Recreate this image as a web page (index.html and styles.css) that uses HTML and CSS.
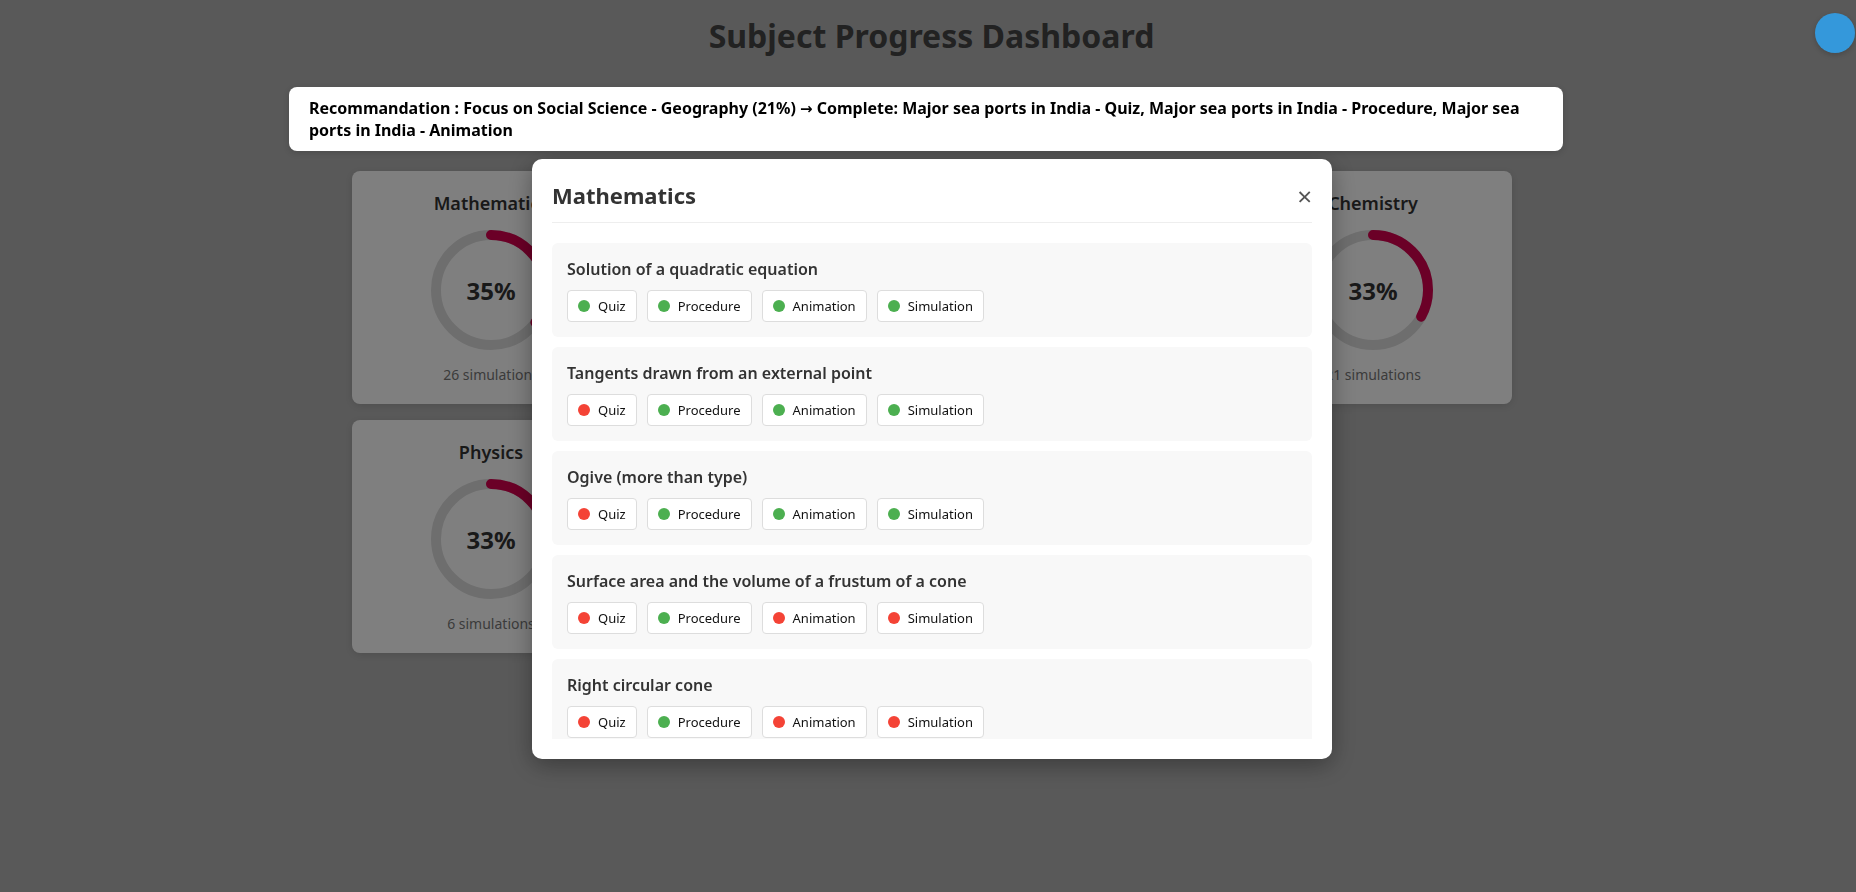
FILE: index.html
```html
<!DOCTYPE html>
<html lang="en">
<head>
<meta charset="utf-8">
<title>Subject Progress Dashboard</title>
<link rel="stylesheet" href="styles.css">
</head>
<body>
<div class="page">
  <h1 class="title">Subject Progress Dashboard</h1>
  <div class="rec">Recommandation : Focus on Social Science - Geography (21%) <span class="arrow">→</span> Complete: Major sea ports in India - Quiz, Major sea ports in India - Procedure, Major sea ports in India - Animation</div>
  <div class="grid">
    <div class="card">
      <h3 class="card-title">Mathematics</h3>
      <div class="ring">
        <svg width="120" height="120" viewBox="0 0 120 120"><circle class="track" cx="60" cy="60" r="55"/><circle class="arc" cx="60" cy="60" r="55" stroke-dasharray="120.95 345.58" transform="rotate(-90 60 60)"/></svg>
        <span class="pct">35%</span>
      </div>
      <p class="count">26 simulations</p>
    </div>
    <div class="card">
      <h3 class="card-title">Biology</h3>
      <div class="ring">
        <svg width="120" height="120" viewBox="0 0 120 120"><circle class="track" cx="60" cy="60" r="55"/><circle class="arc" cx="60" cy="60" r="55" stroke-dasharray="96.76 345.58" transform="rotate(-90 60 60)"/></svg>
        <span class="pct">28%</span>
      </div>
      <p class="count">18 simulations</p>
    </div>
    <div class="card">
      <h3 class="card-title">Social Science - Geography</h3>
      <div class="ring">
        <svg width="120" height="120" viewBox="0 0 120 120"><circle class="track" cx="60" cy="60" r="55"/><circle class="arc" cx="60" cy="60" r="55" stroke-dasharray="72.57 345.58" transform="rotate(-90 60 60)"/></svg>
        <span class="pct">21%</span>
      </div>
      <p class="count">12 simulations</p>
    </div>
    <div class="card">
      <h3 class="card-title">Chemistry</h3>
      <div class="ring">
        <svg width="120" height="120" viewBox="0 0 120 120"><circle class="track" cx="60" cy="60" r="55"/><circle class="arc" cx="60" cy="60" r="55" stroke-dasharray="114.04 345.58" transform="rotate(-90 60 60)"/></svg>
        <span class="pct">33%</span>
      </div>
      <p class="count">21 simulations</p>
    </div>
    <div class="card">
      <h3 class="card-title">Physics</h3>
      <div class="ring">
        <svg width="120" height="120" viewBox="0 0 120 120"><circle class="track" cx="60" cy="60" r="55"/><circle class="arc" cx="60" cy="60" r="55" stroke-dasharray="114.04 345.58" transform="rotate(-90 60 60)"/></svg>
        <span class="pct">33%</span>
      </div>
      <p class="count">6 simulations</p>
    </div>
    <div class="card">
      <h3 class="card-title">Social Science - History</h3>
      <div class="ring">
        <svg width="120" height="120" viewBox="0 0 120 120"><circle class="track" cx="60" cy="60" r="55"/><circle class="arc" cx="60" cy="60" r="55" stroke-dasharray="86.40 345.58" transform="rotate(-90 60 60)"/></svg>
        <span class="pct">25%</span>
      </div>
      <p class="count">8 simulations</p>
    </div>
  </div>
</div>

<div class="overlay">
  <div class="modal">
    <div class="modal-header">
      <h2 class="modal-title">Mathematics</h2>
      <button class="close" type="button">×</button>
    </div>
    <div class="list">
      <div class="item">
        <div class="item-title">Solution of a quadratic equation</div>
        <div class="chips">
          <span class="chip"><i class="dot done"></i>Quiz</span>
          <span class="chip"><i class="dot done"></i>Procedure</span>
          <span class="chip"><i class="dot done"></i>Animation</span>
          <span class="chip"><i class="dot done"></i>Simulation</span>
        </div>
      </div>
      <div class="item">
        <div class="item-title">Tangents drawn from an external point</div>
        <div class="chips">
          <span class="chip"><i class="dot todo"></i>Quiz</span>
          <span class="chip"><i class="dot done"></i>Procedure</span>
          <span class="chip"><i class="dot done"></i>Animation</span>
          <span class="chip"><i class="dot done"></i>Simulation</span>
        </div>
      </div>
      <div class="item">
        <div class="item-title">Ogive (more than type)</div>
        <div class="chips">
          <span class="chip"><i class="dot todo"></i>Quiz</span>
          <span class="chip"><i class="dot done"></i>Procedure</span>
          <span class="chip"><i class="dot done"></i>Animation</span>
          <span class="chip"><i class="dot done"></i>Simulation</span>
        </div>
      </div>
      <div class="item">
        <div class="item-title">Surface area and the volume of a frustum of a cone</div>
        <div class="chips">
          <span class="chip"><i class="dot todo"></i>Quiz</span>
          <span class="chip"><i class="dot done"></i>Procedure</span>
          <span class="chip"><i class="dot todo"></i>Animation</span>
          <span class="chip"><i class="dot todo"></i>Simulation</span>
        </div>
      </div>
      <div class="item">
        <div class="item-title">Right circular cone</div>
        <div class="chips">
          <span class="chip"><i class="dot todo"></i>Quiz</span>
          <span class="chip"><i class="dot done"></i>Procedure</span>
          <span class="chip"><i class="dot todo"></i>Animation</span>
          <span class="chip"><i class="dot todo"></i>Simulation</span>
        </div>
      </div>
      <div class="item">
        <div class="item-title">Mean of grouped data</div>
        <div class="chips">
          <span class="chip"><i class="dot todo"></i>Quiz</span>
          <span class="chip"><i class="dot todo"></i>Procedure</span>
          <span class="chip"><i class="dot todo"></i>Animation</span>
          <span class="chip"><i class="dot todo"></i>Simulation</span>
        </div>
      </div>
    </div>
  </div>
</div>

<div class="fab"></div>
</body>
</html>
```

FILE: styles.css
```css
* { box-sizing: border-box; }

html, body {
  margin: 0;
  padding: 0;
}

body {
  background: #b3b3b3;
  font-family: "Noto Sans", "Open Sans", Arial, sans-serif;
  color: #333;
  height: 892px;
  overflow: hidden;
}

.page {
  padding-top: 14px;
}

.title {
  margin: 0 0 30px;
  padding-left: 7px;
  text-align: center;
  font-size: 32px;
  font-weight: 700;
  color: #444;
  line-height: normal;
}

.rec {
  position: relative;
  z-index: 20;
  width: 1274px;
  margin-left: calc(50% - 639px);
  background: #fff;
  color: #000;
  font-size: 16px;
  font-weight: 700;
  line-height: normal;
  padding: 10px 20px;
  border-radius: 8px;
  box-shadow: 0 2px 6px rgba(0, 0, 0, 0.15);
}

.arrow {
  font-family: "DejaVu Sans", sans-serif;
  font-size: 15px;
  line-height: 1;
}

.grid {
  width: 1160px;
  margin: 20px 0 0 calc(50% - 576px);
  display: grid;
  grid-template-columns: repeat(4, 278px);
  gap: 16px;
}

.card {
  background: #fff;
  border-radius: 8px;
  padding: 20px;
  text-align: center;
  box-shadow: 0 2px 8px rgba(0, 0, 0, 0.12);
}

.card-title {
  margin: 0 0 15px;
  font-size: 18px;
  font-weight: 600;
  line-height: normal;
  color: #333;
  white-space: nowrap;
}

.ring {
  display: grid;
  place-items: center;
  width: 120px;
  height: 120px;
  margin: 0 auto;
}

.ring svg,
.ring .pct {
  grid-area: 1 / 1;
}

.ring svg { display: block; }

.track {
  fill: none;
  stroke: #dddddd;
  stroke-width: 10;
}

.arc {
  fill: none;
  stroke: #d6004e;
  stroke-width: 10;
  stroke-linecap: round;
}

.pct {
  font-size: 24px;
  font-weight: 700;
  color: #333;
}

.count {
  margin: 15px 0 0;
  font-size: 14px;
  color: #777;
  line-height: normal;
}

.overlay {
  position: fixed;
  inset: 0;
  z-index: 10;
  background: rgba(0, 0, 0, 0.5);
  display: flex;
  justify-content: center;
  align-items: flex-start;
  padding: 159px 0 0 8px;
}

.modal {
  width: 800px;
  height: 600px;
  background: #fff;
  border-radius: 10px;
  padding: 20px;
  display: flex;
  flex-direction: column;
  box-shadow: 0 6px 24px rgba(0, 0, 0, 0.35);
}

.modal-header {
  display: flex;
  justify-content: space-between;
  align-items: center;
  padding-bottom: 10px;
  border-bottom: 1px solid #eeeeee;
  margin-bottom: 20px;
}

.modal-title {
  margin: 0;
  font-size: 22px;
  font-weight: 700;
  color: #333;
  line-height: 1.5;
}

.close {
  border: 0;
  background: none;
  padding: 0;
  font-family: "Noto Sans", Arial, sans-serif;
  font-size: 26px;
  line-height: 1;
  color: #555;
  cursor: pointer;
}

.list {
  flex: 1;
  min-height: 0;
  overflow-y: auto;
  scrollbar-width: none;
  display: flex;
  flex-direction: column;
  gap: 10px;
}

.item {
  background: #f8f8f8;
  border-radius: 6px;
  padding: 15px;
  flex-shrink: 0;
}

.item-title {
  font-size: 16px;
  font-weight: 600;
  color: #333;
  line-height: normal;
  margin-bottom: 10px;
}

.chips {
  display: flex;
  gap: 10px;
}

.chip {
  display: inline-flex;
  align-items: center;
  gap: 8px;
  padding: 6px 10px;
  background: #fff;
  border: 1px solid #dddddd;
  border-radius: 4px;
  font-size: 13px;
  line-height: normal;
  color: #111;
}

.dot {
  display: inline-block;
  width: 12px;
  height: 12px;
  border-radius: 50%;
}

.dot.done { background: #4caf50; }
.dot.todo { background: #f44336; }

.fab {
  position: fixed;
  top: 13px;
  right: 1px;
  width: 40px;
  height: 40px;
  border-radius: 50%;
  background: #3498db;
  z-index: 30;
  box-shadow: 0 2px 6px rgba(0, 0, 0, 0.2);
}
```
